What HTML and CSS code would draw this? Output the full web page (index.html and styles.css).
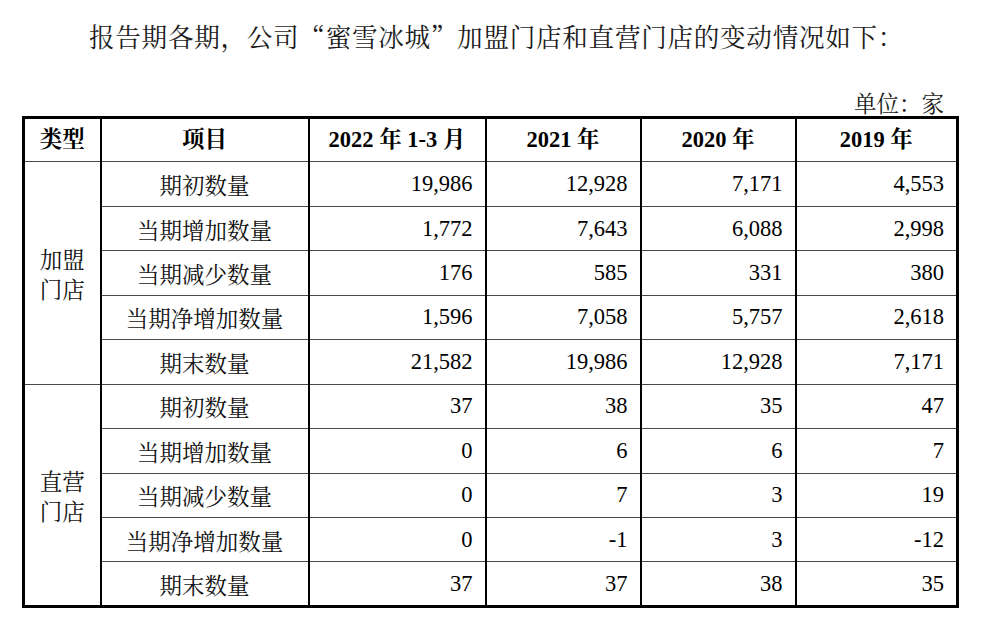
FILE: index.html
```html
<!DOCTYPE html>
<html lang="zh-CN">
<head>
<meta charset="utf-8">
<link rel="stylesheet" href="styles.css">
</head>
<body>
<div class="page">
  <p class="title">报告期各期，公司“蜜雪冰城”加盟门店和直营门店的变动情况如下：</p>
  <p class="unit">单位：家</p>
  <table class="data">
    <colgroup>
      <col class="c-type"><col class="c-item"><col class="c-q"><col class="c-y"><col class="c-y"><col class="c-last">
    </colgroup>
    <thead>
      <tr>
        <th>类型</th><th>项目</th><th>2022 年 1-3 月</th><th>2021 年</th><th>2020 年</th><th>2019 年</th>
      </tr>
    </thead>
    <tbody>
      <tr><td class="type" rowspan="5">加盟<br>门店</td><td class="item">期初数量</td><td class="num">19,986</td><td class="num">12,928</td><td class="num">7,171</td><td class="num">4,553</td></tr>
      <tr><td class="item">当期增加数量</td><td class="num">1,772</td><td class="num">7,643</td><td class="num">6,088</td><td class="num">2,998</td></tr>
      <tr><td class="item">当期减少数量</td><td class="num">176</td><td class="num">585</td><td class="num">331</td><td class="num">380</td></tr>
      <tr><td class="item">当期净增加数量</td><td class="num">1,596</td><td class="num">7,058</td><td class="num">5,757</td><td class="num">2,618</td></tr>
      <tr><td class="item">期末数量</td><td class="num">21,582</td><td class="num">19,986</td><td class="num">12,928</td><td class="num">7,171</td></tr>
      <tr><td class="type" rowspan="5">直营<br>门店</td><td class="item">期初数量</td><td class="num">37</td><td class="num">38</td><td class="num">35</td><td class="num">47</td></tr>
      <tr><td class="item">当期增加数量</td><td class="num">0</td><td class="num">6</td><td class="num">6</td><td class="num">7</td></tr>
      <tr><td class="item">当期减少数量</td><td class="num">0</td><td class="num">7</td><td class="num">3</td><td class="num">19</td></tr>
      <tr><td class="item">当期净增加数量</td><td class="num">0</td><td class="num">-1</td><td class="num">3</td><td class="num">-12</td></tr>
      <tr><td class="item">期末数量</td><td class="num">37</td><td class="num">37</td><td class="num">38</td><td class="num">35</td></tr>
    </tbody>
  </table>
</div>
</body>
</html>
```
FILE: styles.css
```css
html, body {
  margin: 0;
  padding: 0;
  background: #fff;
}
body {
  font-family: "Liberation Serif", "Noto Serif CJK SC", "Noto Sans CJK SC", serif;
  color: #111;
}
.page {
  padding: 20px 42px 0 22px;
}
.title {
  margin: 0;
  padding-left: 67px;
  font-family: "Noto Serif CJK SC", "Noto Sans CJK SC", sans-serif;
  font-size: 25.6px;
  letter-spacing: 0.7px;
  line-height: 32px;
  color: #1a1a1a;
  white-space: nowrap;
  text-spacing-trim: space-all;
}
.unit {
  margin: 36px 0 0 0;
  padding-right: 14px;
  text-align: right;
  font-family: "Noto Serif CJK SC", "Noto Sans CJK SC", sans-serif;
  font-size: 22.5px;
  line-height: 28px;
  color: #1a1a1a;
  text-spacing-trim: space-all;
}
.data {
  width: 934px;
  table-layout: fixed;
  border-collapse: collapse;
  border: 3px solid #000;
  font-size: 22.5px;
}
.c-type { width: 77px; }
.c-item { width: 208px; }
.c-q { width: 177px; }
.c-y { width: 155px; }
.c-last { width: 162px; }
.data tr {
  height: 44.45px;
}
.data th, .data td {
  padding: 0 12px;
  border-left: 2px solid #000;
  border-right: 2px solid #000;
  border-top: 1.5px solid #4a4a4a;
  border-bottom: 1.5px solid #4a4a4a;
  vertical-align: middle;
  line-height: 28px;
  white-space: nowrap;
}
.data th {
  font-weight: bold;
  text-align: center;
  color: #000;
  padding: 0 4px;
}
.data td.item {
  text-align: center;
  font-family: "Noto Serif CJK SC", "Noto Sans CJK SC", sans-serif;
  padding: 0 4px;
}
.data td.type {
  text-align: center;
  font-family: "Noto Serif CJK SC", "Noto Sans CJK SC", sans-serif;
  line-height: 30px;
  padding: 0 4px;
}
.data td.num {
  text-align: right;
  color: #000;
}
```
